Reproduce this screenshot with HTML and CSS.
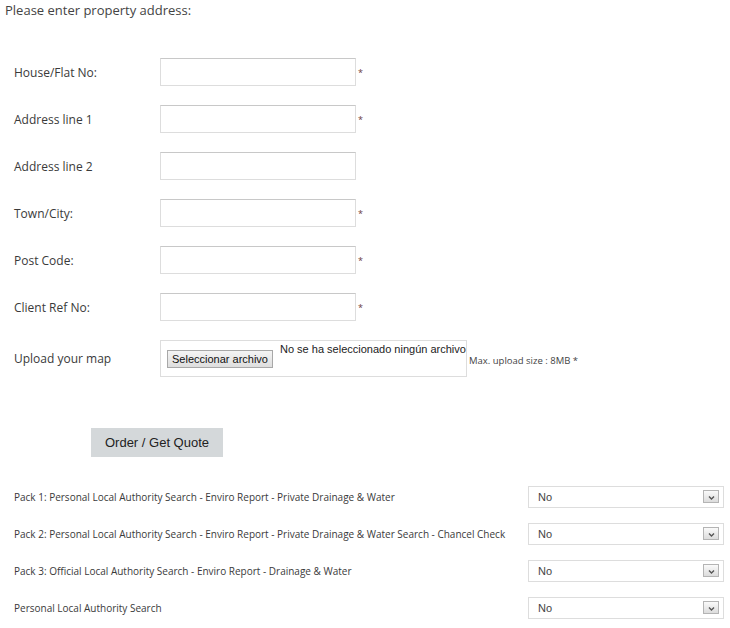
FILE: index.html
```html
<!DOCTYPE html>
<html lang="en">
<head>
  <meta charset="UTF-8" />
  <title>Property Search Order</title>
  <link rel="stylesheet" href="styles.css">
</head>
<body>
  <p class="title">Please enter property address:</p>

  <form class="order-form" onsubmit="return false">
    <div class="fields">
      <label for="house">House/Flat No:</label>
      <div class="field"><input type="text" id="house" /><span class="req">*</span></div>

      <label for="addr1">Address line 1</label>
      <div class="field"><input type="text" id="addr1" /><span class="req">*</span></div>

      <label for="addr2">Address line 2</label>
      <div class="field"><input type="text" id="addr2" /></div>

      <label for="town">Town/City:</label>
      <div class="field"><input type="text" id="town" /><span class="req">*</span></div>

      <label for="postcode">Post Code:</label>
      <div class="field"><input type="text" id="postcode" /><span class="req">*</span></div>

      <label for="clientref">Client Ref No:</label>
      <div class="field"><input type="text" id="clientref" /><span class="req">*</span></div>

      <label>Upload your map</label>
      <div class="field">
        <div class="file-box">
          <button type="button" class="file-btn">Seleccionar archivo</button>
          <span class="file-name">No se ha seleccionado ningún archivo</span>
        </div>
        <span class="upload-note">Max. upload size : 8MB *</span>
      </div>
    </div>

    <button type="submit" class="order-btn">Order / Get Quote</button>

    <div class="packs">
      <span class="pack-label">Pack 1: Personal Local Authority Search - Enviro Report - Private Drainage &amp; Water</span>
      <div class="select-wrap">
        <select><option>No</option><option>Yes</option></select>
        <span class="arrow"><svg width="7" height="4" viewBox="0 0 7 4"><path d="M1 0.5 L3.5 3 L6 0.5" fill="none" stroke="#555" stroke-width="1.4"/></svg></span>
      </div>

      <span class="pack-label">Pack 2: Personal Local Authority Search - Enviro Report - Private Drainage &amp; Water Search - Chancel Check</span>
      <div class="select-wrap">
        <select><option>No</option><option>Yes</option></select>
        <span class="arrow"><svg width="7" height="4" viewBox="0 0 7 4"><path d="M1 0.5 L3.5 3 L6 0.5" fill="none" stroke="#555" stroke-width="1.4"/></svg></span>
      </div>

      <span class="pack-label">Pack 3: Official Local Authority Search - Enviro Report - Drainage &amp; Water</span>
      <div class="select-wrap">
        <select><option>No</option><option>Yes</option></select>
        <span class="arrow"><svg width="7" height="4" viewBox="0 0 7 4"><path d="M1 0.5 L3.5 3 L6 0.5" fill="none" stroke="#555" stroke-width="1.4"/></svg></span>
      </div>

      <span class="pack-label">Personal Local Authority Search</span>
      <div class="select-wrap">
        <select><option>No</option><option>Yes</option></select>
        <span class="arrow"><svg width="7" height="4" viewBox="0 0 7 4"><path d="M1 0.5 L3.5 3 L6 0.5" fill="none" stroke="#555" stroke-width="1.4"/></svg></span>
      </div>
    </div>
  </form>
</body>
</html>
```

FILE: styles.css
```css
body {
  margin: 0;
  font-family: 'Open Sans', sans-serif;
  color: #3a3a3a;
  background: #fff;
}

.title {
  margin: 0;
  padding: 1px 5px 0;
  font-size: 13px;
  line-height: 18px;
  color: #444;
}

.order-form {
  margin: 0;
}

.fields {
  display: grid;
  grid-template-columns: 146px auto;
  row-gap: 19px;
  align-items: center;
  padding-left: 14px;
  margin-top: 39px;
}

.fields label {
  font-size: 12px;
}

.field {
  display: flex;
  align-items: center;
}

.field input {
  box-sizing: border-box;
  width: 196px;
  height: 28px;
  margin: 0;
  border: 1px solid #ddd;
  border-top-color: #c8c8c8;
  padding: 0 4px;
  font-family: inherit;
  font-size: 12px;
}

.req {
  margin-left: 2px;
  font-size: 9px;
  color: #6a3a3a;
  line-height: 1;
}

.file-box {
  box-sizing: border-box;
  width: 307px;
  height: 37px;
  border: 1px solid #ddd;
  padding: 2px 0 0 6px;
  display: flex;
  align-items: flex-start;
  white-space: nowrap;
  overflow: hidden;
  font-family: 'Liberation Sans', Arial, sans-serif;
}

.file-btn {
  box-sizing: border-box;
  width: 106px;
  height: 18px;
  margin-top: 7px;
  padding: 0;
  border: 1px solid #a8a8a8;
  background: linear-gradient(#f4f4f4, #dedede);
  font-family: inherit;
  font-size: 11px;
  color: #111;
}

.file-name {
  margin-left: 7px;
  font-size: 11px;
  line-height: 13px;
  color: #222;
}

.upload-note {
  margin: 4px 0 0 2px;
  font-size: 9.5px;
  color: #444;
}

.order-btn {
  display: block;
  width: 132px;
  height: 29px;
  margin: 51px 0 0 91px;
  padding: 0;
  border: none;
  background: #d4d8da;
  font-family: 'Liberation Sans', Arial, sans-serif;
  font-size: 13px;
  color: #222;
  cursor: pointer;
}

.packs {
  display: grid;
  grid-template-columns: 514px 196px;
  row-gap: 15px;
  align-items: center;
  padding-left: 14px;
  margin-top: 29px;
}

.pack-label {
  font-size: 10px;
  line-height: 14px;
  white-space: nowrap;
}

.select-wrap {
  position: relative;
  height: 22px;
}

.select-wrap select {
  display: block;
  box-sizing: border-box;
  width: 196px;
  height: 22px;
  margin: 0;
  padding: 0 0 0 9px;
  border: 1px solid #ddd;
  background: #fff;
  appearance: none;
  font-family: 'Liberation Sans', Arial, sans-serif;
  font-size: 11px;
  color: #444;
}

.arrow {
  position: absolute;
  top: 4px;
  right: 5px;
  box-sizing: border-box;
  width: 16px;
  height: 13px;
  border: 1px solid #b4b4b4;
  background: linear-gradient(#fafafa, #dcdcdc);
  display: flex;
  justify-content: center;
  align-items: flex-end;
  padding-bottom: 2px;
  pointer-events: none;
}
```
